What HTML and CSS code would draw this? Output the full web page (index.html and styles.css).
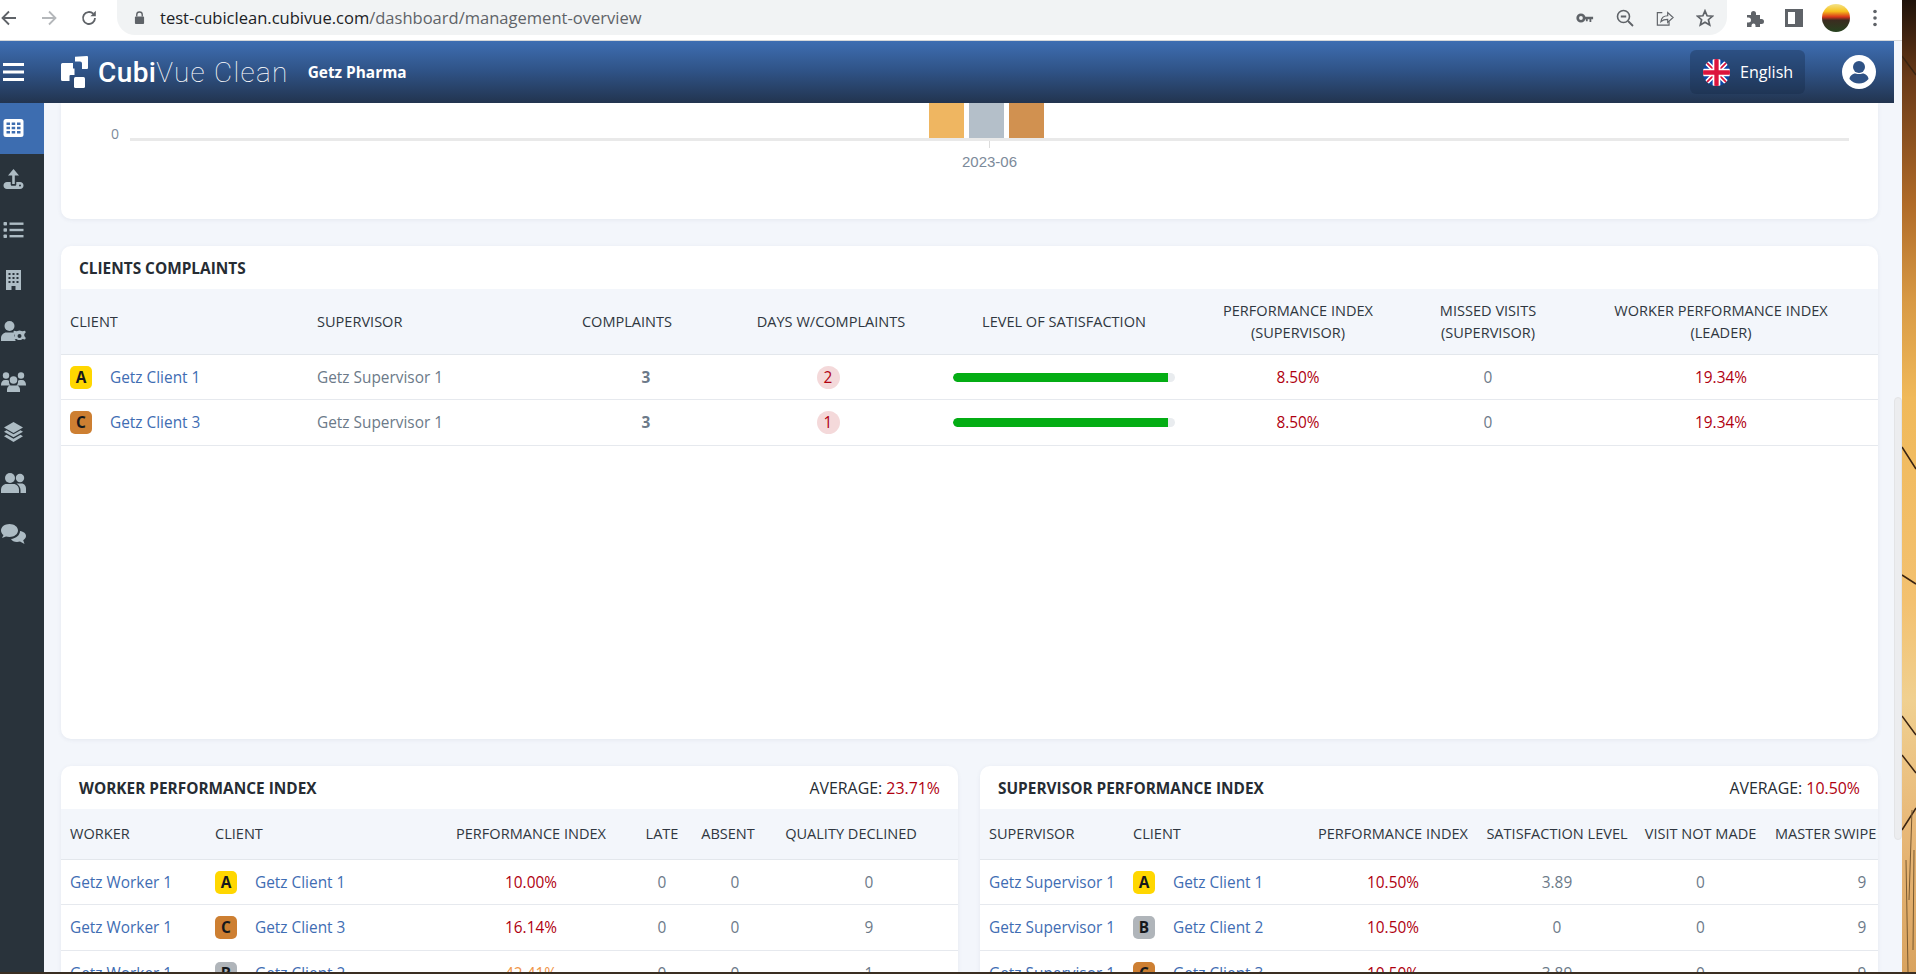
FILE: index.html
```html
<!DOCTYPE html>
<html>

<head>
    <meta charset="utf-8">
    <title>CubiVue Clean</title>
    <link rel="stylesheet" href="styles.css">
</head>

<body>
    <div class="desktop">
        <div class="window">
            <!-- browser toolbar -->
            <div class="toolbar">
                <div class="nav-icons">
                    <svg class="tb-icon" viewBox="0 0 18 18"><path d="M16 9H3M9 2.5 2.5 9 9 15.5" fill="none" stroke="#5f6368" stroke-width="1.8"/></svg>
                    <svg class="tb-icon" viewBox="0 0 18 18"><path d="M2 9h13M9 2.5 15.5 9 9 15.5" fill="none" stroke="#b4b7ba" stroke-width="1.8"/></svg>
                    <svg class="tb-icon" viewBox="0 0 18 18"><path d="M15 9a6 6 0 1 1-1.8-4.3" fill="none" stroke="#5f6368" stroke-width="1.8"/><path d="M15.8 1.8v5.4h-5.4z" fill="#5f6368"/></svg>
                </div>
                <div class="omnibox">
                    <svg class="lock" viewBox="0 0 12 14"><path d="M3 6V4a3 3 0 0 1 6 0v2" fill="none" stroke="#5f6368" stroke-width="1.5"/><rect x="1" y="6" width="10" height="8" rx="1" fill="#5f6368"/></svg>
                    <span class="url"><span class="url-host">test-cubiclean.cubivue.com</span>/dashboard/management-overview</span>
                    <div class="omni-icons">
                        <svg class="tb-icon" viewBox="0 0 20 14"><circle cx="5.5" cy="7" r="3.6" fill="none" stroke="#5f6368" stroke-width="3"/><path d="M9 5.5h10v3h-2v3h-2v-3h-2v2h-2v-2H9z" fill="#5f6368"/></svg>
                        <svg class="tb-icon" viewBox="0 0 18 18"><circle cx="7.5" cy="7.5" r="6" fill="none" stroke="#5f6368" stroke-width="1.6"/><path d="M4.8 7.5h5.4M12 12l5 5" stroke="#5f6368" stroke-width="1.8"/></svg>
                        <svg class="tb-icon" viewBox="0 0 20 18"><path d="M7 3H1.5v14h13v-4" fill="none" stroke="#5f6368" stroke-width="1.3"/><path d="M5.5 13c.5-4 3-6.5 7.5-6.5V3l6 5.5-6 5.5v-3.5c-3 0-5.5 .5-7.5 2.5z" fill="none" stroke="#5f6368" stroke-width="1.3"/></svg>
                        <svg class="tb-icon" viewBox="0 0 18 18"><path d="M9 1.8 11.1 6.8 16.5 7.2 12.4 10.7 13.7 16 9 13.2 4.3 16 5.6 10.7 1.5 7.2 6.9 6.8z" fill="none" stroke="#5f6368" stroke-width="1.7"/></svg>
                    </div>
                </div>
                <div class="ext-icons">
                    <svg class="tb-icon" viewBox="0 0 18 18"><path d="M1 6h4V4.500a2.500 2.500 0 0 1 5 0V6h4v4h1.500a2.500 2.500 0 0 1 0 5H14v3H9.500v-1.500a2 2 0 0 0-4 0V18H1v-4.500h1.500a2.500 2.500 0 0 0 0-5H1z" fill="#5f6368"/></svg>
                    <svg class="tb-icon" viewBox="0 0 18 18"><path d="M0 0h18v18H0zM3 3v12h7V3z" fill="#5f6368" fill-rule="evenodd"/></svg>
                    <div class="profile-pic"></div>
                    <svg class="tb-dots" viewBox="0 0 4 18"><circle cx="2" cy="2.5" r="1.8" fill="#5f6368"/><circle cx="2" cy="9" r="1.8" fill="#5f6368"/><circle cx="2" cy="15.5" r="1.8" fill="#5f6368"/></svg>
                </div>
            </div>

            <div class="viewport">
                <div class="app">
                    <header class="topbar">
                        <svg class="hamburger" viewBox="0 0 21 18"><path d="M0 1.5h21M0 9h21M0 16.5h21" stroke="#fff" stroke-width="3"/></svg>
                        <svg class="logo" viewBox="0 0 27 32"><path d="M1.5 7H12v5.500h1.500V19H9.500a1 1 0 0 0-1 1v5H1.500a1.500 1.500 0 0 1-1.500-1.500v-15A1.500 1.500 0 0 1 1.500 7z" fill="#fff"/><path d="M14 .8 26 0a1 1 0 0 1 1 1v11a1 1 0 0 1-1 1H21V7.500a2 2 0 0 0-2-2h-5z" fill="#fff"/><rect x="13" y="21" width="11" height="11" rx="1.5" fill="#fff"/></svg>
                        <span class="brand"><span class="brand-strong">Cubi</span>Vue Clean</span>
                        <span class="company">Getz Pharma</span>
                        <div class="topbar-right">
                            <div class="lang-btn">
                                <svg class="flag" viewBox="0 0 28 28">
                                    <clipPath id="flagclip"><circle cx="14" cy="14" r="14"/></clipPath>
                                    <g clip-path="url(#flagclip)">
                                        <rect width="28" height="28" fill="#0b47a8"/>
                                        <path d="M0 0 28 28M28 0 0 28" stroke="#fff" stroke-width="5"/>
                                        <path d="M0 0 28 28M28 0 0 28" stroke="#dc143c" stroke-width="1.8"/>
                                        <path d="M14 0v28M0 14h28" stroke="#fff" stroke-width="8"/>
                                        <path d="M14 0v28M0 14h28" stroke="#dc143c" stroke-width="4.5"/>
                                    </g>
                                </svg>
                                <span>English</span>
                            </div>
                            <svg class="user-circle" viewBox="0 0 34 34"><circle cx="17" cy="17" r="17" fill="#fff"/><circle cx="17" cy="12" r="6" fill="#2f5285"/><path d="M7.500 24c0-3 3-5.500 6-5.500 2.200 .8 4.800 .8 7 0 3 0 6 2.500 6 5.500-2.500 3-6 4.500-9.500 4.500s-7-1.500-9.500-4.500z" fill="#2f5285"/></svg>
                        </div>
                    </header>

                    <div class="content">
                        <nav class="sidebar">
                            <div class="side-item active">
                                <svg class="side-icon" viewBox="-2.5 -1 25 20"><rect width="20" height="18" rx="2.5" fill="#fff"/><path d="M3 3.500h3.500v2.500H3zM8.200 3.500h3.500v2.500H8.200zM13.500 3.500H17v2.500h-3.500zM3 7.800h3.500v2.500H3zM8.200 7.800h3.500v2.500H8.200zM13.500 7.800H17v2.500h-3.500zM3 12h3.500v2.500H3zM8.200 12h3.500v2.500H8.200zM13.500 12H17v2.500h-3.500z" fill="#3d6db0"/></svg>
                            </div>
                            <div class="side-item">
                                <svg class="side-icon" viewBox="-2.5 0 25 20"><path d="M10 0l5.500 6.500h-4.200V15H8.700V6.500H4.500z"/><path fill-rule="evenodd" d="M3.500 13h3.700v2.500c0 .8 .6 1.300 1.300 1.300h3c.7 0 1.300-.5 1.300-1.300V13h3.700c2 0 3.500 1.500 3.500 3.500S18.500 20 16.500 20h-13C1.500 20 0 18.500 0 16.500S1.500 13 3.500 13zm13 2.500a1 1 0 1 0 0 2 1 1 0 0 0 0-2z"/></svg>
                            </div>
                            <div class="side-item">
                                <svg class="side-icon" viewBox="-2.5 -2 25 20"><rect width="3.5" height="3.5" rx=".8"/><rect y="6.200" width="3.5" height="3.5" rx=".8"/><rect y="12.500" width="3.5" height="3.5" rx=".8"/><rect x="6" y=".5" width="14" height="2.4"/><rect x="6" y="6.800" width="14" height="2.4"/><rect x="6" y="13" width="14" height="2.4"/></svg>
                            </div>
                            <div class="side-item">
                                <svg class="side-icon" viewBox="-2.5 0 25 20"><path fill-rule="evenodd" d="M2.500 0h15v20H12v-4H8v4H2.500zM5 3v2h2V3zm4 0v2h2V3zm4 0v2h2V3zM5 7v2h2V7zm4 0v2h2V7zm4 0v2h2V7zM5 11v2h2v-2zm4 0v2h2v-2zm4 0v2h2v-2z"/></svg>
                            </div>
                            <div class="side-item">
                                <svg class="side-icon" viewBox="0 0 25 20"><circle cx="8.500" cy="5" r="5"/><path d="M0 20v-3c0-3 2.500-5.500 5.500-5.500h6c1 0 2 .3 2.800 .8a6.500 6.500 0 0 0 .5 7.700z"/><path fill-rule="evenodd" d="M18.500 9.500l3 .8 2.500-.5.800 1.500-1.500 1.800v2l1.500 1.800-.8 1.500-2.500-.5-1.500 1.200h-3l-1.500-1.200-2.500 .5-.8-1.500 1.500-1.800v-2l-1.500-1.800.8-1.500 2.500 .5zm0 3.500a2 2 0 1 0 0 4 2 2 0 0 0 0-4z"/></svg>
                            </div>
                            <div class="side-item">
                                <svg class="side-icon" viewBox="0 0 25 20"><circle cx="5" cy="3.500" r="3.200"/><circle cx="20" cy="3.500" r="3.200"/><circle cx="12.500" cy="8" r="3.800"/><path d="M0 13c0-3 1.500-5 4-5h2c.8 0 1.500 .2 2 .7-.3 2 .5 3.800 1.500 4.800H0zM25 13c0-3-1.500-5-4-5h-2c-.8 0-1.500 .2-2 .7 .3 2-.5 3.800-1.500 4.800H25zM6 20v-2.500c0-2 1.500-4 3.500-4h6c2 0 3.500 2 3.500 4V20z"/></svg>
                            </div>
                            <div class="side-item">
                                <svg class="side-icon" viewBox="-2.5 0 25 20"><path d="M10 0l9.500 5.500L10 11 .5 5.500z"/><path d="M3 8.300l7 4 7-4 2.500 1.500L10 15.300.5 9.800z"/><path d="M3 12.800l7 4 7-4 2.500 1.500L10 20 .5 14.300z"/></svg>
                            </div>
                            <div class="side-item">
                                <svg class="side-icon" viewBox="0 0 25 20"><circle cx="9" cy="5" r="5"/><circle cx="19" cy="5" r="4.200"/><path d="M0 20v-3c0-3.500 2.500-6 5.500-6h7c3 0 5.500 2.500 5.500 6v3z"/><path d="M15.500 10.500h5c2.500 0 4.500 2.300 4.500 5V20h-5.500v-3c0-2.500-1.500-5-4-6.500z"/></svg>
                            </div>
                            <div class="side-item">
                                <svg class="side-icon" viewBox="0 0 25 20"><path d="M8.500 0C3.800 0 0 2.800 0 6.500c0 1.800 1 3.400 2.500 4.600L1 14l4-1.500c1 .3 2.300 .5 3.500 .5 4.700 0 8.500-2.900 8.500-6.500S13.200 0 8.500 0z"/><path d="M19 7c0 4-3.800 7.500-9 8 1 1.800 3.200 3 6 3 1 0 2-.2 3-.5l4.500 2.500-1.300-3.800c1.700-1 2.800-2.500 2.800-4.200 0-2.500-2.200-4.500-6-5z"/></svg>
                            </div>
                        </nav>

                        <main class="main">
                            <section class="card card-chart">
                                <div class="chart-row">
                                    <span class="axis-zero">0</span>
                                    <div class="plot">
                                        <div class="bars">
                                            <div class="bar bar-gold"></div>
                                            <div class="bar bar-silver"></div>
                                            <div class="bar bar-bronze"></div>
                                        </div>
                                        <div class="baseline"></div>
                                        <div class="tick"></div>
                                        <div class="tick-label">2023-06</div>
                                    </div>
                                </div>
                            </section>

                            <section class="card card-tall">
                                <div class="card-head">
                                    <h3>CLIENTS COMPLAINTS</h3>
                                </div>
                                <table class="grid">
                                    <colgroup>
                                        <col class="w-247"><col class="w-228"><col class="w-182"><col class="w-226"><col class="w-240"><col class="w-228"><col class="w-152"><col class="w-314">
                                    </colgroup>
                                    <thead class="head-tall">
                                        <tr>
                                            <th class="left">CLIENT</th>
                                            <th class="left">SUPERVISOR</th>
                                            <th>COMPLAINTS</th>
                                            <th>DAYS W/COMPLAINTS</th>
                                            <th>LEVEL OF SATISFACTION</th>
                                            <th>PERFORMANCE INDEX<br>(SUPERVISOR)</th>
                                            <th>MISSED VISITS<br>(SUPERVISOR)</th>
                                            <th>WORKER PERFORMANCE INDEX<br>(LEADER)</th>
                                        </tr>
                                    </thead>
                                    <tbody>
                                        <tr>
                                            <td class="left"><div class="client"><span class="grade grade-a">A</span><a>Getz Client 1</a></div></td>
                                            <td class="left">Getz Supervisor 1</td>
                                            <td class="strong">3</td>
                                            <td class="pill-cell"><span class="pill">2</span></td>
                                            <td><div class="progress"><div class="progress-fill"></div></div></td>
                                            <td class="red">8.50%</td>
                                            <td>0</td>
                                            <td class="red">19.34%</td>
                                        </tr>
                                        <tr>
                                            <td class="left"><div class="client"><span class="grade grade-c">C</span><a>Getz Client 3</a></div></td>
                                            <td class="left">Getz Supervisor 1</td>
                                            <td class="strong">3</td>
                                            <td class="pill-cell"><span class="pill">1</span></td>
                                            <td><div class="progress"><div class="progress-fill"></div></div></td>
                                            <td class="red">8.50%</td>
                                            <td>0</td>
                                            <td class="red">19.34%</td>
                                        </tr>
                                    </tbody>
                                </table>
                            </section>

                            <div class="two-cols">
                                <section class="card card-left">
                                    <div class="card-head">
                                        <h3>WORKER PERFORMANCE INDEX</h3>
                                        <div class="average">AVERAGE: <span class="red">23.71%</span></div>
                                    </div>
                                    <table class="grid">
                                        <colgroup>
                                            <col class="w-145"><col class="w-222"><col class="w-206"><col class="w-56"><col class="w-90"><col class="w-178">
                                        </colgroup>
                                        <thead>
                                            <tr>
                                                <th class="left">WORKER</th>
                                                <th class="left">CLIENT</th>
                                                <th>PERFORMANCE INDEX</th>
                                                <th>LATE</th>
                                                <th class="nudge-small">ABSENT</th>
                                                <th class="nudge-big">QUALITY DECLINED</th>
                                            </tr>
                                        </thead>
                                        <tbody>
                                            <tr>
                                                <td class="left"><a>Getz Worker 1</a></td>
                                                <td class="left"><div class="client"><span class="grade grade-a">A</span><a>Getz Client 1</a></div></td>
                                                <td class="red">10.00%</td>
                                                <td>0</td><td>0</td><td>0</td>
                                            </tr>
                                            <tr>
                                                <td class="left"><a>Getz Worker 1</a></td>
                                                <td class="left"><div class="client"><span class="grade grade-c">C</span><a>Getz Client 3</a></div></td>
                                                <td class="red">16.14%</td>
                                                <td>0</td><td>0</td><td>9</td>
                                            </tr>
                                            <tr>
                                                <td class="left"><a>Getz Worker 1</a></td>
                                                <td class="left"><div class="client"><span class="grade grade-b">B</span><a>Getz Client 2</a></div></td>
                                                <td class="orange">42.41%</td>
                                                <td>0</td><td>0</td><td>1</td>
                                            </tr>
                                        </tbody>
                                    </table>
                                </section>

                                <section class="card card-right">
                                    <div class="card-head">
                                        <h3>SUPERVISOR PERFORMANCE INDEX</h3>
                                        <div class="average">AVERAGE: <span class="red">10.50%</span></div>
                                    </div>
                                    <table class="grid grid-wide">
                                        <colgroup>
                                            <col class="w-144"><col class="w-178"><col class="w-182"><col class="w-146"><col class="w-141"><col class="w-182">
                                        </colgroup>
                                        <thead>
                                            <tr>
                                                <th class="left">SUPERVISOR</th>
                                                <th class="left">CLIENT</th>
                                                <th>PERFORMANCE INDEX</th>
                                                <th>SATISFACTION LEVEL</th>
                                                <th>VISIT NOT MADE</th>
                                                <th class="left-tight">MASTER SWIPE</th>
                                            </tr>
                                        </thead>
                                        <tbody>
                                            <tr>
                                                <td class="left"><a>Getz Supervisor 1</a></td>
                                                <td class="left"><div class="client"><span class="grade grade-a">A</span><a>Getz Client 1</a></div></td>
                                                <td class="red">10.50%</td>
                                                <td>3.89</td><td>0</td><td>9</td>
                                            </tr>
                                            <tr>
                                                <td class="left"><a>Getz Supervisor 1</a></td>
                                                <td class="left"><div class="client"><span class="grade grade-b">B</span><a>Getz Client 2</a></div></td>
                                                <td class="red">10.50%</td>
                                                <td>0</td><td>0</td><td>9</td>
                                            </tr>
                                            <tr>
                                                <td class="left"><a>Getz Supervisor 1</a></td>
                                                <td class="left"><div class="client"><span class="grade grade-c">C</span><a>Getz Client 3</a></div></td>
                                                <td class="red">10.50%</td>
                                                <td>3.89</td><td>0</td><td>9</td>
                                            </tr>
                                        </tbody>
                                    </table>
                                </section>
                            </div>
                        </main>
                    </div>
                </div>
                <div class="scrollbar">
                    <div class="thumb"></div>
                </div>
            </div>
        </div>
        <div class="wallpaper">
            <svg class="wallpaper-art" viewBox="0 0 14 972" preserveAspectRatio="none">
                <path d="M0 56 14 75M0 447 14 469M0 575 14 584M0 716 14 735M0 755 14 773M0 830 14 808" fill="none" stroke="#3a2412" stroke-width="1.5"/>
                <path d="M10 810 7 900M4 860 6 972M12 850 11 950" fill="none" stroke="#7a5a30" stroke-width="1"/>
            </svg>
        </div>
    </div>
    <div class="taskbar"></div>
</body>

</html>
```
FILE: styles.css
```css
* {
    box-sizing: border-box;
    margin: 0;
}

body {
    width: 1916px;
    height: 974px;
    overflow: hidden;
    font-family: "Open Sans", "Noto Sans", sans-serif;
    font-size: 15.4px;
    color: #6c7a89;
    background-color: #3a2e22;
}

.desktop {
    display: flex;
    height: 972px;
}

.taskbar {
    height: 2px;
    background-color: #3a2e22;
}

.wallpaper {
    width: 14px;
    background: linear-gradient(180deg, #1f120a 0%, #6a3a18 8%, #b06b28 21%, #d89a45 31%, #f0b95a 41%, #f3c170 62%, #f0d090 72%, #e8b878 85%, #d9a35f 100%);
}

.wallpaper-art {
    display: block;
    width: 14px;
    height: 972px;
}

.window {
    width: 1902px;
    display: flex;
    flex-direction: column;
}

/* browser toolbar */
.toolbar {
    height: 41px;
    flex-shrink: 0;
    display: flex;
    background-color: #fff;
    border-bottom: 1px solid #d6d8da;
}

.nav-icons {
    width: 117px;
    height: 35px;
    display: flex;
    align-items: center;
    gap: 22px;
}

.tb-icon {
    width: 18px;
    height: 18px;
    flex-shrink: 0;
}

.omnibox {
    width: 1610px;
    height: 35px;
    display: flex;
    align-items: center;
    padding: 0 13px 0 17px;
    background-color: #f1f3f4;
    border-radius: 0 0 18px 18px;
}

.lock {
    width: 11px;
    height: 13px;
    margin-right: 15px;
}

.url {
    font-size: 16.55px;
    color: #5f6368;
    white-space: nowrap;
}

.url-host {
    color: #202124;
}

.omni-icons {
    margin-left: auto;
    display: flex;
    align-items: center;
    gap: 22px;
}

.ext-icons {
    height: 35px;
    flex: 1;
    display: flex;
    align-items: center;
    padding-left: 19px;
    gap: 21px;
}

.profile-pic {
    width: 28px;
    height: 28px;
    margin-left: -2px;
    border-radius: 50%;
    background: linear-gradient(180deg, #f3e38a 0%, #f7c21c 26%, #d9371a 46%, #3b2c20 58%, #27421f 100%);
}

.tb-dots {
    width: 4px;
    height: 18px;
    margin-left: 2px;
}

.viewport {
    flex: 1;
    display: flex;
    min-height: 0;
    background-color: #f3f6fb;
}

.app {
    width: 1894px;
    display: flex;
    flex-direction: column;
}

.scrollbar {
    width: 8px;
    padding-top: 356px;
}

.thumb {
    height: 443px;
    background-color: #ecedef;
    border: 1px solid #e3e4e6;
    border-radius: 4px;
}

/* app header */
.topbar {
    height: 62px;
    flex-shrink: 0;
    display: flex;
    align-items: center;
    padding-left: 3px;
    background: linear-gradient(180deg, #3e6eb2 0%, #2f5285 50%, #22344f 100%);
    color: #fff;
}

.hamburger {
    width: 21px;
    height: 18px;
}

.logo {
    width: 27px;
    height: 32px;
    margin-left: 37px;
}

.brand {
    margin-left: 10px;
    font-family: Roboto, sans-serif;
    font-size: 28px;
    font-weight: 100;
    letter-spacing: 1.3px;
    white-space: nowrap;
}

.brand-strong {
    font-weight: 500;
    letter-spacing: 0.4px;
}

.company {
    margin-left: 19px;
    font-size: 15.4px;
    font-weight: 700;
    white-space: nowrap;
}

.topbar-right {
    margin-left: auto;
    display: flex;
    align-items: center;
    padding-right: 18px;
}

.lang-btn {
    width: 115px;
    height: 44px;
    display: flex;
    align-items: center;
    gap: 10px;
    padding-left: 13px;
    font-size: 16.1px;
    background-color: rgba(20, 40, 70, 0.35);
    border-radius: 6px;
}

.flag {
    width: 27px;
    height: 27px;
}

.user-circle {
    width: 34px;
    height: 34px;
    margin-left: 37px;
}

.content {
    flex: 1;
    display: flex;
    min-height: 0;
}

/* side menu */
.sidebar {
    width: 44px;
    flex-shrink: 0;
    background-color: #29333b;
}

.side-item {
    height: 50.7px;
    display: flex;
    align-items: center;
    padding-left: 1px;
}

.side-item.active {
    background-color: #3d6db0;
}

.side-icon {
    width: 25px;
    height: 20px;
    fill: #adbcc4;
}

.main {
    flex: 1;
    min-width: 0;
    display: flex;
    flex-direction: column;
    gap: 27px;
    padding: 0 16px 0 17px;
    overflow: hidden;
}

.card {
    flex-shrink: 0;
    background-color: #fff;
    border-radius: 10px;
    box-shadow: 0 1px 4px rgba(60, 80, 110, 0.08);
    overflow: hidden;
}

.card-chart {
    height: 116px;
    border-radius: 0 0 10px 10px;
    padding-left: 50px;
    padding-right: 29px;
}

.chart-row {
    display: flex;
}

.axis-zero {
    width: 19px;
    padding-top: 21px;
    font-size: 14px;
    color: #7c8a9a;
}

.plot {
    flex: 1;
    display: flex;
    flex-direction: column;
    align-items: center;
}

.bars {
    height: 35px;
    display: flex;
    gap: 5px;
    margin-right: 6px;
}

.bar {
    width: 35px;
}

.bar-gold {
    background-color: #efb661;
}

.bar-silver {
    background-color: #b4bfc9;
}

.bar-bronze {
    background-color: #d19150;
}

.baseline {
    width: 100%;
    height: 3px;
    background-color: #e9e9e9;
}

.tick {
    width: 1px;
    height: 7px;
    background-color: #dcdcdc;
}

.tick-label {
    margin-top: 5px;
    font-family: "Liberation Sans", sans-serif;
    font-size: 15px;
    color: #7c8a9a;
}

.card-tall {
    height: 493px;
}

.card-head {
    height: 43px;
    display: flex;
    align-items: center;
    justify-content: space-between;
    padding: 0 18px;
    color: #262c33;
}

.card-head h3 {
    padding-top: 1px;
    font-size: 15.4px;
    font-weight: 700;
}

.average {
    font-size: 15.9px;
}

.red {
    color: #b00010;
}

.orange {
    color: #f0954a;
}

.two-cols {
    display: flex;
    gap: 22px;
}

.card-left {
    width: 897px;
}

.card-right {
    width: 898px;
}

/* tables */
.grid {
    width: 100%;
    table-layout: fixed;
    border-collapse: collapse;
}

.grid-wide {
    width: 973px;
}

.grid thead {
    background-color: #f3f6fb;
}

.grid th {
    height: 50px;
    padding: 0 0 2px;
    font-size: 14.55px;
    font-weight: 400;
    line-height: 22px;
    color: #2f3640;
    text-align: center;
    white-space: nowrap;
    border-bottom: 1px solid #e3e7ec;
}

.grid .head-tall th {
    height: 65px;
    padding-bottom: 0;
}

.grid td {
    height: 45.5px;
    padding: 1px 9px 0;
    text-align: center;
    white-space: nowrap;
    border-bottom: 1px solid #e6e9ee;
}

.grid th.left,
.grid td.left {
    padding-left: 9px;
    text-align: left;
}

.grid th.left-tight {
    text-align: left;
    padding-left: 4px;
}

.grid th.nudge-small {
    padding-right: 14px;
}

.grid th.nudge-big {
    padding-right: 36px;
}

.grid a {
    color: #3f6db3;
}

/* the counts sit right of their heading */
.grid td.strong {
    padding-left: 47px;
    font-weight: 700;
}

.grid td.pill-cell {
    padding-right: 15px;
}

.client {
    display: flex;
    align-items: center;
    gap: 18px;
}

.grade {
    width: 22px;
    height: 23px;
    flex-shrink: 0;
    display: flex;
    align-items: center;
    justify-content: center;
    border-radius: 5px;
    font-weight: 700;
    color: #15181c;
}

.grade-a {
    background-color: #ffd700;
}

.grade-b {
    background-color: #b0b5ba;
}

.grade-c {
    background-color: #cd7f32;
}

.pill {
    display: inline-block;
    width: 23px;
    height: 23px;
    line-height: 23px;
    border-radius: 50%;
    color: #b00010;
    background-color: #f4d9da;
}

.progress {
    height: 9px;
    background-color: #e9ecef;
    border-radius: 5px;
    overflow: hidden;
}

.progress-fill {
    width: 97%;
    height: 100%;
    background-color: #04ad14;
    border-radius: 5px 0 0 5px;
}

.w-247 { width: 247px; }
.w-228 { width: 228px; }
.w-182 { width: 182px; }
.w-226 { width: 226px; }
.w-240 { width: 240px; }
.w-152 { width: 152px; }
.w-314 { width: 314px; }
.w-145 { width: 145px; }
.w-222 { width: 222px; }
.w-206 { width: 206px; }
.w-56 { width: 56px; }
.w-90 { width: 90px; }
.w-178 { width: 178px; }
.w-144 { width: 144px; }
.w-146 { width: 146px; }
.w-141 { width: 141px; }
```
